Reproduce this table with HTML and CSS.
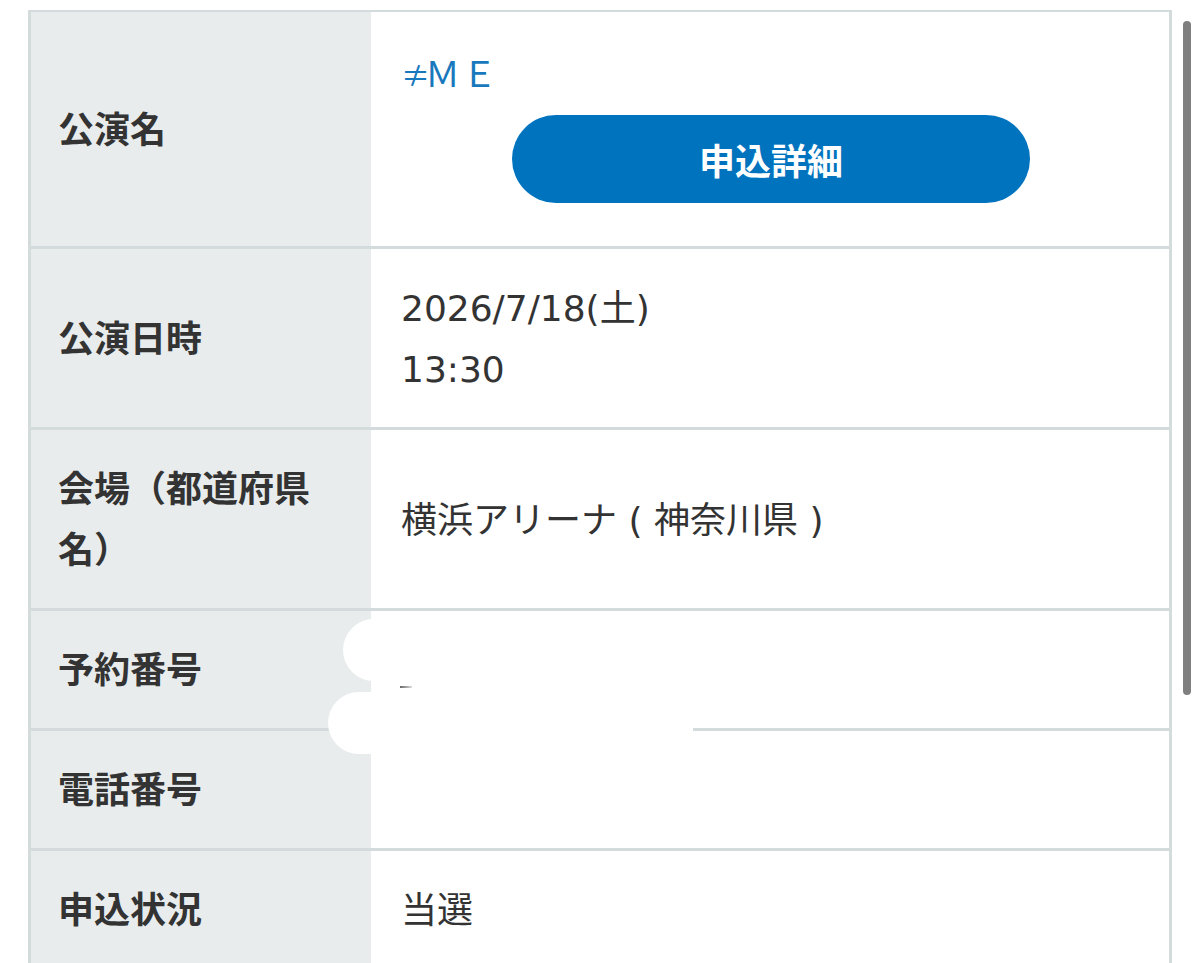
FILE: index.html
```html
<!doctype html>
<html lang="ja">
<head>
	<title>申込状況</title>
	<meta charset="utf-8">
	<link rel="stylesheet" href="styles.css">
</head>

<body>

	<table class="info">
		<tr>
			<th>公演名</th>
			<td>
				<div class="title"><span class="ne">≠</span>ＭＥ</div>
				<a class="button" href="#">申込詳細</a>
			</td>
		</tr>
		<tr>
			<th>公演日時</th>
			<td>2026/7/18(土)<br>13:30</td>
		</tr>
		<tr>
			<th>会場（都道府県名）</th>
			<td>横浜アリーナ ( 神奈川県 )</td>
		</tr>
		<tr>
			<th>予約番号</th>
			<td></td>
		</tr>
		<tr>
			<th>電話番号</th>
			<td></td>
		</tr>
		<tr>
			<th>申込状況</th>
			<td>当選</td>
		</tr>
	</table>

	<!-- hand-drawn white-out over the private numbers -->
	<div class="mask one"></div>
	<div class="mask two"></div>
	<div class="speck"></div>

	<div class="scrollbar"></div>

</body>
</html>
```

FILE: styles.css
```css
html {
	overflow: hidden;
}
body {
	margin: 0;
	padding: 10px 0 0 28px;
	background: #fff;
	color: #333;
	font: 36px/61px "Noto Sans CJK JP", sans-serif;
}
.info {
	width: 1144px;
	border-collapse: collapse;
	border: 3px solid #d3dbdc;
	border-top-width: 2px;
}
.info tr {
	border-bottom: 3px solid #d3dbdc;
}
.info th,
.info td {
	vertical-align: middle;
	text-align: left;
}
.info th {
	width: 270px;
	padding: 26px 43px 30px 27px;
	background: #e8eced;
	font-weight: bold;
	word-break: break-all;
}
.info td {
	padding: 29px 20px 27px 30px;
	background: #fff;
	font-family: "DejaVu Sans", "Noto Sans CJK JP", sans-serif;
	font-weight: normal;
}
.title {
	color: #1878bd;
	font-family: "Noto Sans CJK JP", sans-serif;
	font-size: 35px;
	letter-spacing: 2px;
}
.title .ne {
	font-size: 29px;
	line-height: 0;
	letter-spacing: -5px;
}
.button {
	display: block;
	width: 518px;
	height: 88px;
	margin: 13px auto 16px 111px;
	border-radius: 44px;
	background: #0073bf;
	color: #fff;
	font-family: "Noto Sans CJK JP", sans-serif;
	font-weight: bold;
	line-height: 88px;
	text-align: center;
	text-decoration: none;
}
.mask {
	position: absolute;
	background: #fff;
}
.mask.one {
	top: 619px;
	left: 343px;
	width: 420px;
	height: 62px;
	border-radius: 31px 0 0 31px;
}
.mask.two {
	top: 692px;
	left: 328px;
	width: 365px;
	height: 62px;
	border-radius: 31px 60px 0 31px / 31px 36px 0 31px;
}
.speck {
	position: absolute;
	top: 686px;
	left: 400px;
	width: 12px;
	height: 2px;
	background: linear-gradient(to right, #666, #ddd);
}
.scrollbar {
	position: absolute;
	top: 21px;
	left: 1183px;
	width: 8px;
	height: 674px;
	border-radius: 4px;
	background: #7f7f7f;
}
```
